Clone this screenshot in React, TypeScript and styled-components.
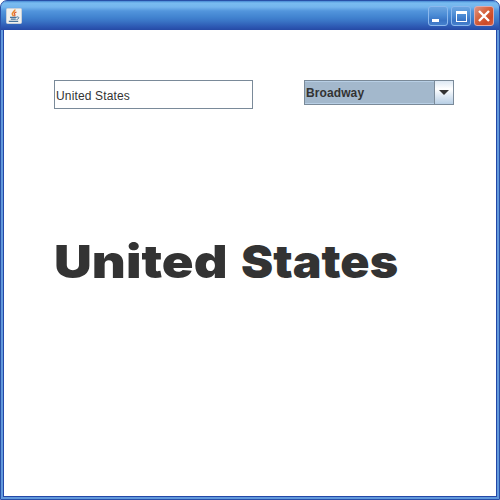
import React from 'react';
import styled, { createGlobalStyle } from 'styled-components';

const GlobalStyle = createGlobalStyle`
  * { box-sizing: border-box; }
  body { margin: 0; background: #fff; }
`;

const Window = styled.div`
  display: flex;
  flex-direction: column;
  width: 500px;
  height: 500px;
  overflow: hidden;
  border: 1px solid #2850a8;
  border-radius: 7px 7px 0 0;
  background: #fff;
  box-shadow: inset 0 0 0 2px #6299dc, inset 0 0 0 3px #2448a8;
  font-family: "Liberation Sans", Arial, sans-serif;
`;

const TitleBar = styled.header`
  display: flex;
  align-items: center;
  gap: 3px;
  height: 29px;
  flex: none;
  padding: 1px 5px 0 5px;
  border-radius: 6px 6px 0 0;
  background: linear-gradient(#478ad4 0, #79bcf0 2px, #74b5ed 6px, #5295dc 10px, #4284d0 16px, #3a75c6 20px, #2c57b2 26px, #264aa5 29px);
`;

const AppIcon = styled.svg`
  display: block;
  width: 16px;
  height: 16px;
  margin-right: auto;
`;

const TitleButton = styled.button<{ $close?: boolean }>`
  width: 20px;
  height: 20px;
  padding: 0;
  border: 1px solid ${p => (p.$close ? '#dfa8aa' : '#8bb8ed')};
  border-radius: 3px;
  background: ${p => (p.$close
    ? 'linear-gradient(135deg, #dd9384, #d66540 40%, #cc4926 75%, #d66243)'
    : 'linear-gradient(#6ca5e1, #4b8cd5 45%, #3973c4 75%, #4580cd)')};
  svg { display: block; width: 18px; height: 18px; }
`;

const Content = styled.main`
  flex: 1;
  padding: 50px 45px 0 53px;
  color: #333;
`;

const Controls = styled.div`
  display: flex;
  align-items: flex-start;
  justify-content: space-between;
  height: 154px;
`;

const TextField = styled.input`
  width: 199px;
  height: 29px;
  padding: 3px 1px 0;
  border: 1px solid #7a8a99;
  border-radius: 0;
  background: #fff;
  color: #333;
  font: 12px "Liberation Sans", Arial, sans-serif;
  letter-spacing: 0.15px;
  outline: none;
`;

const ComboBox = styled.div`
  display: flex;
  width: 150px;
  height: 25px;
  border: 1px solid #7a8a99;
`;

const ComboValue = styled.div`
  flex: 1;
  padding-left: 1px;
  border: 1px solid #b8cfe5;
  border-width: 1px 0 1px 0;
  background: #a3b8cc;
  font-size: 12px;
  font-weight: bold;
  line-height: 22px;
  letter-spacing: 0.1px;
`;

const ComboArrow = styled.div`
  display: flex;
  align-items: center;
  justify-content: center;
  width: 19px;
  border-left: 1px solid #7a8a99;
  background: linear-gradient(#dde8f3 0, #fff 35%, #dde8f3 65%, #b8cfe5);
`;

const Preview = styled.h1`
  margin: 0;
  color: #333;
  font: 900 46px/54px Inter, sans-serif;
  white-space: pre;
`;

const Word = styled.span<{ $stretch: number; $lead: number }>`
  display: inline-block;
  margin-left: ${p => p.$lead}px;
  transform: scaleX(${p => p.$stretch});
  transform-origin: left center;
`;

export default function App() {
  return (
    <>
      <GlobalStyle />
      <Window>
        <TitleBar>
          <AppIcon viewBox="0 0 16 16" fill="none">
            <rect x=".5" y=".5" width="15" height="15" rx="1" fill="#f1f1ee" stroke="#c8d0d8" />
            <path d="M8.8 1.5c.7 2-3.6 3-2.4 5 .4.7 1 1 1.2 1.8" stroke="#e98a31" strokeWidth="1.6" />
            <path d="M10.5 4c-2 .7-2.8 1.4-1.8 2.4.5.6.2 1.4-.4 1.8" stroke="#e05b29" strokeWidth="1.2" />
            <path d="M4 9.4h6.6M4.8 11.2h5M2.8 13.4h9.4" stroke="#47749c" strokeWidth="1.2" />
            <path d="M10.7 9c2.9-.7 2.7 2-.1 2.5" stroke="#47749c" />
          </AppIcon>
          <TitleButton aria-label="Minimize">
            <svg viewBox="0 0 18 18"><path d="M3 12h7v3H3z" fill="#fff" /></svg>
          </TitleButton>
          <TitleButton aria-label="Maximize">
            <svg viewBox="0 0 18 18"><path d="M4 4h11v11H4zM5 7v7h9V7z" fill="#fff" fillRule="evenodd" /></svg>
          </TitleButton>
          <TitleButton $close aria-label="Close">
            <svg viewBox="0 0 18 18"><path d="M4 4l10 10m0-10l-10 10" stroke="#fff" strokeWidth="2.4" /></svg>
          </TitleButton>
        </TitleBar>
        <Content>
          <Controls>
            <TextField defaultValue="United States" aria-label="Text" />
            <ComboBox>
              <ComboValue>Broadway</ComboValue>
              <ComboArrow>
                <svg width="10" height="5" viewBox="0 0 10 5"><path d="M0 0h10L5 5z" fill="#333" /></svg>
              </ComboArrow>
            </ComboBox>
          </Controls>
          <Preview>
            <Word $stretch={1.14} $lead={0}>United</Word>{' '}
            <Word $stretch={1.05} $lead={26}>States</Word>
          </Preview>
        </Content>
      </Window>
    </>
  );
}
